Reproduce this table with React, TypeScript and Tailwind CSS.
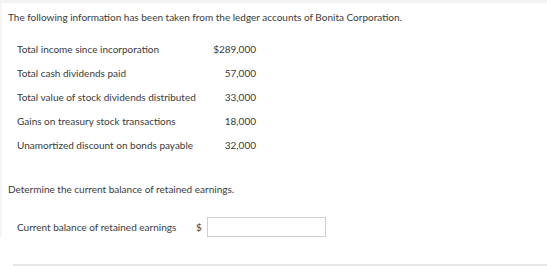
export default function App() {
  const rows = [
    { label: 'Total income since incorporation', value: '$289,000' },
    { label: 'Total cash dividends paid', value: '57,000' },
    { label: 'Total value of stock dividends distributed', value: '33,000' },
    { label: 'Gains on treasury stock transactions', value: '18,000' },
    { label: 'Unamortized discount on bonds payable', value: '32,000' },
  ];

  return (
    <div
      className="w-[547px] h-[266px] bg-white overflow-hidden text-[#3a3a3a] text-[10px]"
      style={{ fontFamily: 'Lato, "Open Sans", sans-serif' }}
    >
      {/* top strip */}
      <div className="h-[3px] bg-[#f3f3f3]" />
      <div className="flex">
        <div className="w-[2px] bg-[#f5f5f5]" />
        <div className="flex-1 pl-[6px]">
          <p className="mt-[8px] leading-[12px]">
            The following information has been taken from the ledger accounts of Bonita Corporation.
          </p>

          {/* ledger values */}
          <div className="mt-[14px] pl-[9px]">
            {rows.map((row) => (
              <div key={row.label} className="flex h-[24px] items-center">
                <span className="w-[190px]">{row.label}</span>
                <span className="w-[49px] text-right">{row.value}</span>
              </div>
            ))}
          </div>

          <p className="mt-[26px] leading-[12px]">Determine the current balance of retained earnings.</p>

          {/* answer row */}
          <div className="mt-[22px] pl-[9px] flex items-center">
            <span className="w-[179px]">Current balance of retained earnings</span>
            <span className="w-[11px]">$</span>
            <input
              className="w-[119px] h-[20px] border border-[#cfcfcf] outline-none"
              type="text"
            />
          </div>
        </div>
      </div>
      <div className="mt-[27px] ml-[13px] h-[2px] bg-[#e6e6e6]" />
    </div>
  );
}
